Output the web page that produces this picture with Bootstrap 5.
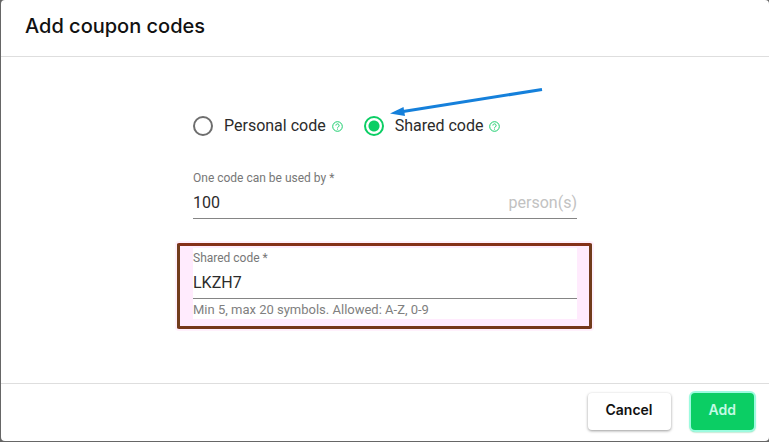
<!DOCTYPE html>
<html lang="en">
<head>
<meta charset="utf-8">
<meta name="viewport" content="width=device-width, initial-scale=1">
<title>Add coupon codes</title>
<link href="https://cdn.jsdelivr.net/npm/bootstrap@5.3.0/dist/css/bootstrap.min.css" rel="stylesheet">
<style>
body{background:#666;font-family:Roboto,sans-serif;color:#2b2b2b}
.dialog-sheet{background:#fff;margin:0 0 1px 1px;border-radius:4px;min-height:calc(100vh - 1px)}
.dialog-head{padding:11px 24px 15px;border-bottom:1px solid #dedede}
.dialog-title{font:500 20px/30px Inter,sans-serif;color:#111;margin:0}
.dialog-foot{padding:9px 15px 11px;border-top:1px solid #dedede;gap:20px}
.coupon-form{width:100%;max-width:384px;padding-top:56px}
.kind-row{position:relative;gap:21px;margin-bottom:32px;height:26px}
.kind-label{font-size:16px;line-height:26px;margin:0 6px 0 11px}
.kind-radio.form-check-input{width:20px;height:20px;margin:0;border:2px solid #6e6e6e;flex:none;background:#fff;box-shadow:none}
.kind-radio.form-check-input:checked{border-color:#0bce64;background:radial-gradient(circle,#0bce64 5px,#fff 6px)}
.help-icon{width:11px;height:11px;color:#19cd6c;flex:none;display:block}
.pointer-arrow{position:absolute;left:194px;top:-26px;width:160px;height:32px;pointer-events:none}
.field-label{display:block;font-size:12px;line-height:14px;color:#777;margin:0}
.field-line{border-bottom:1px solid #858585;height:34px}
.field-input.form-control{border:0;border-radius:0;padding:3px 0 1px;background:transparent;font-size:16px;line-height:24px;color:#2b2b2b;box-shadow:none;min-width:0}
.field-unit{font-size:16px;line-height:24px;padding-top:6px;color:#c2c2c2}
.field-hint{font-size:13px;line-height:14px;color:#808080;padding-top:4px}
.marked-field{margin:24px -15px 0 -16px;border:3px solid #853019;border-left-color:#713c1c;border-right-color:#713c1c;border-bottom-color:#753719;border-radius:2px;background:#ffebfd;padding:2px 12px 7px 13px;box-shadow:0 0 0 2px #fff0fc}
.marked-inner{background:#fff;padding:3px 0 2px}
.action-btn.btn{font:600 14px/20px Inter,sans-serif;height:37px;padding:6px 18px 9px;border:0;border-radius:4px}
.cancel-btn.btn{background:#fff;color:#111;box-shadow:0 1px 3px #0006}
.add-btn.btn{background:#0bce64;color:#c4fae4;box-shadow:0 0 0 2px #9dfbe0,0 1px 2px 1px #47ba78}
</style>
</head>
<body>
<main class="dialog-sheet d-flex flex-column">
<header class="dialog-head"><h1 class="dialog-title">Add coupon codes</h1></header>
<form class="d-flex flex-column flex-grow-1">
<div class="coupon-form mx-auto flex-grow-1">
<div class="kind-row d-flex">
<div class="d-flex align-items-center"><input class="form-check-input kind-radio" type="radio" name="kind" id="personal"><label class="kind-label" for="personal">Personal code</label>
<svg class="help-icon" viewBox="0 0 11 11" fill="none" stroke="currentColor" aria-hidden="true"><circle cx="5.5" cy="5.5" r="4.8"/><path d="M3.9 4.5a1.6 1.6 0 1 1 2.5 1.3q-.9.6-.9 1.1M5.5 7.6v1"/></svg></div>
<div class="d-flex align-items-center"><input class="form-check-input kind-radio" type="radio" name="kind" id="shared" checked><label class="kind-label" for="shared">Shared code</label>
<svg class="help-icon" viewBox="0 0 11 11" fill="none" stroke="currentColor" aria-hidden="true"><circle cx="5.5" cy="5.5" r="4.8"/><path d="M3.9 4.5a1.6 1.6 0 1 1 2.5 1.3q-.9.6-.9 1.1M5.5 7.6v1"/></svg></div>
<svg class="pointer-arrow" viewBox="0 0 160 32" aria-hidden="true"><path d="M155 2.5 16 24.5" stroke="#1580db" stroke-width="3"/><path d="M3 26.5 16.5 20 18 29z" fill="#1580db"/></svg>
</div>
<div>
<label class="field-label" for="uses">One code can be used by *</label>
<div class="field-line d-flex"><input class="form-control field-input" id="uses" type="text" value="100"><span class="field-unit">person(s)</span></div>
</div>
<div class="marked-field"><div class="marked-inner">
<label class="field-label" for="code">Shared code *</label>
<div class="field-line d-flex"><input class="form-control field-input" id="code" type="text" value="LKZH7" aria-describedby="hint"></div>
<div class="field-hint" id="hint">Min 5, max 20 symbols. Allowed: A-Z, 0-9</div>
</div></div>
</div>
<footer class="dialog-foot d-flex justify-content-end">
<button class="btn action-btn cancel-btn" type="button">Cancel</button>
<button class="btn action-btn add-btn" type="submit">Add</button>
</footer>
</form>
</main>
<script src="https://cdn.jsdelivr.net/npm/bootstrap@5.3.0/dist/js/bootstrap.bundle.min.js"></script>
</body>
</html>
